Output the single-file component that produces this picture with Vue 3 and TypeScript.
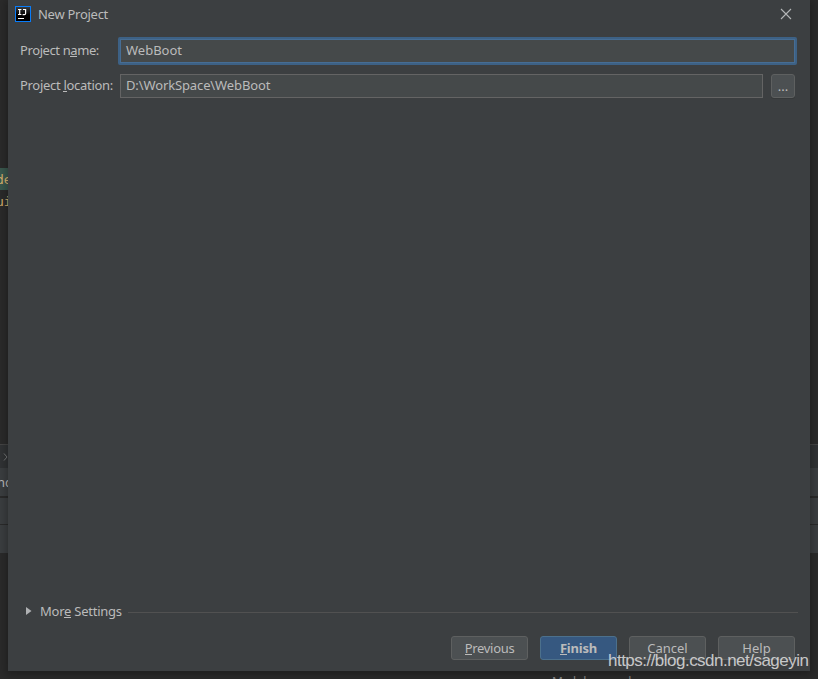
<script lang="ts" setup>
import {ref} from 'vue';

const projectName = ref('WebBoot');
const projectLocation = ref('D:\\WorkSpace\\WebBoot');

// Each label is split after its mnemonic letter
const buttons = [
  {id: 'previous', key: 'P', text: 'revious'},
  {id: 'finish', key: 'F', text: 'inish'},
  {id: 'cancel', key: '', text: 'Cancel'},
  {id: 'help', key: '', text: 'Help'},
];
</script>

<template>
  <div class="screen">
    <!-- editor window behind the dialog -->
    <div class="editor">
      <div class="code-gap"></div>
      <div class="code-line selected"><span class="code">de</span></div>
      <div class="code-line"><span class="code">ui</span></div>
      <div class="code-rest"></div>
      <div class="crumbs">
        <svg width="8" height="10" viewBox="0 0 8 10"><path d="M4 1.5 L7 5 L4 8.5" /></svg>
      </div>
      <div class="tool-row first"><span>nc</span></div>
      <div class="tool-row second"></div>
      <div class="tool-row third"></div>
      <div class="console"><span>Markdown and</span></div>
    </div>

    <div class="dialog">
      <div class="title-bar">
        <svg class="logo" width="16" height="16" viewBox="0 0 16 16">
          <defs>
            <linearGradient id="logo-fill" x1="0" y1="0" x2="0" y2="1">
              <stop offset="0" stop-color="#3c3f41" />
              <stop offset="0.55" stop-color="#000" />
            </linearGradient>
          </defs>
          <rect x="0.5" y="0.5" width="15" height="15" fill="url(#logo-fill)" stroke="#087cfa" />
          <path class="mark" d="M3 3.5 H6.4 M4.7 3.5 V8.5 M3 8.5 H6.4 M8 3.5 H10.6 V7.4 Q10.6 8.6 9.4 8.6 H7.6" />
          <rect x="3" y="12" width="6" height="1" fill="#fff" />
        </svg>
        <span class="title">New Project</span>
        <svg class="close" width="12" height="12" viewBox="0 0 12 12"><path d="M1 1 L11 11 M11 1 L1 11" /></svg>
      </div>

      <div class="form">
        <div class="form-row">
          <label class="name-label">Project n<u>a</u>me:</label>
          <div class="field focused"><span>{{ projectName }}</span></div>
        </div>
        <div class="form-row">
          <label class="location-label">Project <u>l</u>ocation:</label>
          <div class="field"><span class="location-value">{{ projectLocation }}</span></div>
          <button class="browse">...</button>
        </div>
      </div>

      <div class="more">
        <svg width="6" height="8" viewBox="0 0 6 8"><path d="M0 0 L5.5 4 L0 8 Z" /></svg>
        <span>Mor<u>e</u> Settings</span>
        <i></i>
      </div>

      <div class="buttons">
        <button v-for="b in buttons" :key="b.id" :class="['btn', b.id]">
          <span><u v-if="b.key">{{ b.key }}</u>{{ b.text }}</span>
        </button>
      </div>
    </div>

    <div class="watermark">https://blog.csdn.net/sageyin</div>
  </div>
</template>

<style>
body {
  margin: 0;
  background: #2b2b2b;
}
</style>

<style scoped>
* {
  box-sizing: border-box;
}

.screen {
  position: relative;
  width: 818px;
  height: 679px;
  overflow: hidden;
  background: #2b2b2b;
  color: #bbb;
  font-family: "Noto Sans", "Open Sans", sans-serif;
  font-size: 13px;
  line-height: 18px;
}

.screen span,
.screen label {
  white-space: nowrap;
}

u {
  text-decoration: none;
  background: linear-gradient(#bbb, #bbb) left bottom 2px / 100% 1px no-repeat;
}

.editor {
  position: absolute;
  inset: 0;
  display: flex;
  flex-direction: column;
}

.editor > div {
  flex-shrink: 0;
}

.code-gap {
  height: 168px;
}

.code-line {
  width: 100px;
  height: 22px;
  line-height: 22px;
}

.code-line.selected {
  background: #3b594f;
}

.code {
  margin-left: -4px;
  color: #d9b36f;
  font-family: "DejaVu Sans Mono", monospace;
  font-size: 13px;
}

.code-rest {
  height: 232px;
}

.crumbs {
  height: 24px;
  border-top: 1px solid #454545;
  background: #313335;
}

.crumbs svg {
  display: block;
  margin-top: 7px;
}

.crumbs path {
  fill: none;
  stroke: #77797a;
}

.tool-row {
  border-bottom: 1px solid #2b2b2b;
  background: #3c3f41;
}

.tool-row.first {
  height: 30px;
  border-bottom-width: 2px;
  line-height: 29px;
}

.tool-row.first span {
  margin-left: -3px;
}

.tool-row.second {
  height: 27px;
}

.tool-row.third {
  height: 29px;
}

.console {
  padding: 119px 0 0 552px;
  color: #8c8c8c;
  font-size: 12px;
  letter-spacing: -0.5px;
}

.dialog {
  position: relative;
  display: flex;
  flex-direction: column;
  width: 802px;
  height: 671px;
  margin-left: 8px;
  background: #3c3f41;
  box-shadow: 0 2px 9px 2px rgba(0, 0, 0, 0.3);
}

.title-bar {
  display: flex;
  align-items: center;
  height: 28px;
  padding: 0 18px 0 7px;
}

.title {
  flex: 1;
  margin-left: 7px;
  padding-bottom: 1px;
  letter-spacing: -0.27px;
}

.mark {
  fill: none;
  stroke: #fff;
  stroke-width: 1.2;
}

.close path {
  stroke: #b4b6b7;
  stroke-width: 1.1;
}

.form {
  display: flex;
  flex-direction: column;
  gap: 9px;
  padding: 9px 15px 0 12px;
}

.form-row {
  display: flex;
  align-items: center;
}

.form-row label {
  flex: 0 0 100px;
  padding-bottom: 2px;
}

.name-label {
  letter-spacing: -0.4px;
}

.location-label {
  letter-spacing: -0.3px;
}

.field {
  flex: 1;
  height: 24px;
  padding-left: 5px;
  border: 1px solid #646464;
  background: #45494a;
  line-height: 21px;
}

.field.focused {
  height: 28px;
  margin: 0 -2px;
  padding-left: 6px;
  border: 2px solid #3d6185;
  border-radius: 2px;
  box-shadow: inset 0 0 0 1px #466d94;
  line-height: 22px;
}

.location-value {
  letter-spacing: -0.12px;
}

button {
  padding: 0;
  border: 1px solid #5e6060;
  border-radius: 3px;
  background: #4c5052;
  color: #bbb;
  font: inherit;
}

.browse {
  width: 24px;
  height: 24px;
  margin: 0 0 0 8px;
  box-shadow: 0 1px 0 #36393a;
}

.more {
  display: flex;
  align-items: center;
  height: 18px;
  margin: auto 12px 0 18px;
}

.more svg {
  margin: 0 8px 2px 0;
}

.more span {
  padding-bottom: 2px;
  letter-spacing: -0.24px;
}

.more path {
  fill: #afb1b3;
}

.more i {
  flex: 1;
  height: 1px;
  margin: 1px 0 0 6px;
  background: #515151;
}

.buttons {
  display: flex;
  justify-content: flex-end;
  gap: 12px;
  padding: 15px 15px 11px 0;
}

.btn {
  width: 77px;
  height: 24px;
}

.btn.previous {
  letter-spacing: -0.3px;
}

.btn.finish {
  border-color: #4c708c;
  background: #365880;
  font-weight: bold;
  letter-spacing: -0.2px;
}

.watermark {
  position: absolute;
  top: 649px;
  left: 608px;
  color: rgba(225, 225, 225, 0.85);
  font-family: "Liberation Sans", Arial, sans-serif;
  font-size: 17px;
  letter-spacing: -0.52px;
  line-height: 23px;
  white-space: nowrap;
}
</style>
